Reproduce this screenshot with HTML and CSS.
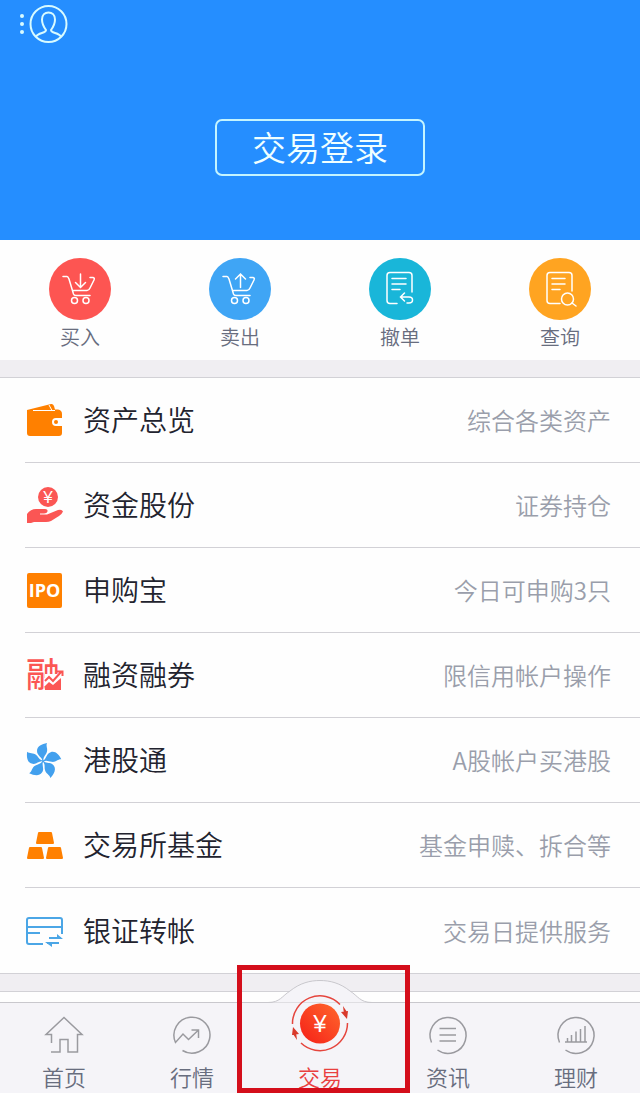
FILE: index.html
```html
<!DOCTYPE html>
<html lang="zh-CN">
<head>
  <meta charset="UTF-8" />
  <meta name="viewport" content="width=device-width, initial-scale=1.0"/>
  <title>交易</title>
  <link rel="stylesheet" href="styles.css">
</head>
<body>
  <!-- 顶部 -->
  <header class="header">
    <button class="header-user" aria-label="用户">
      <svg width="50" height="40" viewBox="0 0 50 40" fill="none" stroke="#d8fbff" stroke-width="2">
        <g fill="#d8fbff" stroke="none">
          <circle cx="4" cy="12" r="2"/><circle cx="4" cy="20" r="2"/><circle cx="4" cy="28" r="2"/>
        </g>
        <circle cx="30.5" cy="20" r="18"/>
        <path d="M18 33C20 28 28 30 28 26C25 22 24 19 24 15.5C24 11 27 8.5 30.5 8.5S37 11 37 15.5C37 19 36 22 33 26C33 30 41 28 43 33"/>
      </svg>
    </button>
    <button class="btn-login">交易登录</button>
  </header>

  <!-- 快捷操作 -->
  <nav class="quick">
    <a class="quick-item" href="#">
      <svg class="quick-icon red" viewBox="0 0 62 62">
        <path d="M14 18.5H18Q19 18.5 20 21L24.5 36Q25 37.5 27 37.5H41M23.5 32.5H38Q40 32.5 41 30L45 22Q46 20 44 19.5H41"/>
        <circle cx="25.5" cy="42.5" r="3"/><circle cx="37" cy="42.5" r="3"/>
        <path d="M31.5 16V29M26.5 24.5L31.5 29.5L36.5 24.5"/>
      </svg>
      <span>买入</span>
    </a>
    <a class="quick-item" href="#">
      <svg class="quick-icon blue" viewBox="0 0 62 62">
        <path d="M14 18.5H18Q19 18.5 20 21L24.5 36Q25 37.5 27 37.5H41M23.5 32.5H38Q40 32.5 41 30L45 22Q46 20 44 19.5H41"/>
        <circle cx="25.5" cy="42.5" r="3"/><circle cx="37" cy="42.5" r="3"/>
        <path d="M31.5 29.5V16.5M26.5 21L31.5 16L36.5 21"/>
      </svg>
      <span>卖出</span>
    </a>
    <a class="quick-item" href="#">
      <svg class="quick-icon cyan" viewBox="0 0 62 62">
        <path d="M28 45.5H21Q18 45.5 18 42.5V17.5Q18 14.5 21 14.5H40Q43 14.5 43 17.5V34"/>
        <path d="M23 20.5H37M23 26H37M23 31.5H31"/>
        <path d="M35.5 35L31.5 39L35.5 43M32 39H40Q43.5 39 43.5 42T40 45H38"/>
      </svg>
      <span>撤单</span>
    </a>
    <a class="quick-item" href="#">
      <svg class="quick-icon orange" viewBox="0 0 62 62">
        <path d="M31 45.5H21Q18 45.5 18 42.5V17.5Q18 14.5 21 14.5H40Q43 14.5 43 17.5V33"/>
        <path d="M23 20.5H36M23 26H36M23 31.5H31"/>
        <circle cx="38.5" cy="41" r="6"/><path d="M43 45L47 48"/>
      </svg>
      <span>查询</span>
    </a>
  </nav>

  <!-- 功能列表 -->
  <main class="menu">
    <a class="menu-row" href="#">
      <svg class="menu-icon" viewBox="0 0 38 38">
        <path fill="#ff8000" d="M2 9L26 3Q28 2.5 29 5L30 8.5H33Q37 9 37 13V17H31Q27 17 27 21T31 25H37V32Q37 35 34 35H5Q2 35 2 32Z"/>
        <path stroke="#fff" stroke-width="1" fill="none" d="M8 9.5H30M24 4L27 9.5"/>
        <circle cx="31" cy="21" r="2" fill="#ff8000"/>
      </svg>
      <span class="menu-title">资产总览</span>
      <span class="menu-note">综合各类资产</span>
    </a>
    <a class="menu-row" href="#">
      <svg class="menu-icon" viewBox="0 0 38 38">
        <circle cx="23" cy="11" r="10" fill="#fb5654"/>
        <text class="yen" x="23" y="17" font-size="17">¥</text>
        <path fill="#fb5654" d="M2 28Q6 22.5 12 23H20Q23 23 22.5 25.5Q22 27.5 19 27.5H15V28.5H22L33 24Q37 23 38 25.5Q37 28 34 30L26 35Q24 36 21 36H9L6 37H2Z"/>
      </svg>
      <span class="menu-title">资金股份</span>
      <span class="menu-note">证券持仓</span>
    </a>
    <a class="menu-row" href="#">
      <svg class="menu-icon" viewBox="0 0 38 38">
        <rect x="2" y="2" width="35" height="35" rx="2" fill="#ff8000"/>
        <text class="ipo" x="19.5" y="26">IPO</text>
      </svg>
      <span class="menu-title">申购宝</span>
      <span class="menu-note">今日可申购3只</span>
    </a>
    <a class="menu-row" href="#">
      <svg class="menu-icon" viewBox="0 0 38 38">
        <text class="rong" x="1" y="31">融</text>
        <path fill="#fefefe" d="M20 18H40V38H20Z"/>
        <path fill="#fb5654" d="M20 34V30L24 26L28 29L36 22V34Z"/>
        <path fill="none" stroke="#fb5654" stroke-width="2" d="M20 25L24 21L28 25L36 16M32 15.5H37.5V20"/>
      </svg>
      <span class="menu-title">融资融券</span>
      <span class="menu-note">限信用帐户操作</span>
    </a>
    <a class="menu-row" href="#">
      <svg class="menu-icon" viewBox="0 0 38 38">
        <defs>
          <path id="petal" d="M-0.5 0C-0.5 -4 -6 -5 -6 -10C-6 -15 -1 -17 4 -18C2.5 -15 5.5 -12 3.5 -8C2 -5 0 -4 0.5 0Z"/>
        </defs>
        <g transform="translate(18 20)" fill="#42a0ee">
          <use href="#petal"/>
          <use href="#petal" transform="rotate(72)"/>
          <use href="#petal" transform="rotate(144)"/>
          <use href="#petal" transform="rotate(216)"/>
          <use href="#petal" transform="rotate(288)"/>
        </g>
      </svg>
      <span class="menu-title">港股通</span>
      <span class="menu-note">A股帐户买港股</span>
    </a>
    <a class="menu-row" href="#">
      <svg class="menu-icon" viewBox="0 0 38 38" fill="#ff8000" stroke="#ff8000" stroke-width="2" stroke-linejoin="round">
        <path d="M14 7H26L28 17H12Z"/>
        <path d="M5 22H16L18 32H3Z"/>
        <path d="M24 22H35L37 32H22Z"/>
      </svg>
      <span class="menu-title">交易所基金</span>
      <span class="menu-note">基金申赎、拆合等</span>
    </a>
    <a class="menu-row" href="#">
      <svg class="menu-icon" viewBox="0 0 38 38" fill="none" stroke="#4ba6e6" stroke-width="2">
        <path d="M18 32H4Q2 32 2 30V8Q2 6 4 6H35Q37 6 37 8V22"/>
        <path d="M2 15H37M2 21H15M24 26H36M22 31H34"/>
        <path fill="#4ba6e6" stroke="none" d="M32 22L38 27H32ZM27 35L20 30H27Z"/>
      </svg>
      <span class="menu-title">银证转帐</span>
      <span class="menu-note">交易日提供服务</span>
    </a>
  </main>

  <!-- 底部导航 -->
  <nav class="tabbar">
    <a class="tab" href="#">
      <svg class="tab-icon" viewBox="0 0 38 38">
        <path d="M6.5 27V18.5H1L19 1.5L37 18.5H32.5V36H23V23.5H15V36H6"/>
      </svg>
      <span>首页</span>
    </a>
    <a class="tab" href="#">
      <svg class="tab-icon" viewBox="0 0 38 38">
        <path d="M9.5 34.5A18 18 0 1 0 2.5 26.5L10 18L15.5 23.5L25.5 14M18.5 14H25.5V22"/>
      </svg>
      <span>行情</span>
    </a>
    <a class="tab tab-active" href="#">
      <svg class="hump" viewBox="0 0 104 24">
        <path d="M0 23.5C12 23.5 14 17 22 12C32 4 42 1.5 52 1.5S72 4 82 12C90 17 92 23.5 104 23.5"/>
      </svg>
      <svg class="trade-icon" viewBox="0 0 60 60">
        <defs>
          <linearGradient id="coin" x1="1" y1="0" x2="0" y2="1">
            <stop offset="0" stop-color="#ff682c"/>
            <stop offset="1" stop-color="#f51f18"/>
          </linearGradient>
        </defs>
        <circle cx="30" cy="29.5" r="20" fill="url(#coin)"/>
        <text class="yen" x="30" y="38" font-size="24">¥</text>
        <g fill="none" stroke="#e5453d" stroke-width="1.5">
          <path d="M2.5 30A27.5 27.5 0 0 1 50 10.5"/>
          <path d="M57.5 29A27.5 27.5 0 0 1 11 49"/>
        </g>
        <path fill="#d93a2c" d="M51 18L58 17L57 25ZM53 12L57 18L54 20ZM9 40L2 41L3 33ZM7 46L3 40L6 38Z"/>
      </svg>
      <span>交易</span>
      <i class="mark"></i>
    </a>
    <a class="tab" href="#">
      <svg class="tab-icon" viewBox="0 0 38 38">
        <path d="M8.5 34A18 18 0 1 0 2.5 26.5M10.5 12.5H27M10.5 19H27M10.5 25H27"/>
      </svg>
      <span>资讯</span>
    </a>
    <a class="tab" href="#">
      <svg class="tab-icon" viewBox="0 0 38 38">
        <path d="M8.5 34A18 18 0 1 0 2.5 26.5M8 26H30M10.5 26V22M14.5 26V19M19 26V15.5M23.5 26V13M28 26V10"/>
      </svg>
      <span>理财</span>
    </a>
  </nav>
</body>
</html>
```
FILE: styles.css
```css
* {
  box-sizing: border-box;
}

body {
  margin: 0;
  min-height: 100vh;
  display: flex;
  flex-direction: column;
  font-family: "Noto Sans CJK SC", sans-serif;
  font-weight: 350;
  background: #fefefe;
}

a {
  color: inherit;
  text-decoration: none;
}

svg {
  display: block;
  overflow: visible;
}

.header {
  height: 240px;
  padding: 4px 18px;
  background: #258eff;
  display: flex;
  flex-direction: column;
  align-items: center;
}

.header-user {
  align-self: flex-start;
  padding: 0;
  border: none;
  background: none;
  cursor: pointer;
}

.btn-login {
  width: 210px;
  height: 57px;
  margin-top: 75px;
  padding: 0 0 2px;
  border: 2px solid #c4f4ff;
  border-radius: 7px;
  background: none;
  color: #f0ffff;
  font: inherit;
  font-size: 34px;
  line-height: 50px;
  cursor: pointer;
}

.quick {
  display: grid;
  grid-template-columns: repeat(4, 1fr);
  padding: 18px 0 8px;
}

.quick-item {
  display: flex;
  flex-direction: column;
  align-items: center;
  gap: 2px;
  font-size: 20px;
  line-height: 30px;
  color: #686d7e;
}

.quick-icon {
  width: 62px;
  height: 62px;
  border-radius: 50%;
  fill: none;
  stroke: #fff;
  stroke-width: 1.5;
  stroke-linecap: round;
}

.red {
  background: #fd5552;
}

.blue {
  background: #3fa5f5;
}

.cyan {
  background: #19b6d9;
}

.orange {
  background: #ffa421;
}

/* 列表 */
.menu {
  border-top: 17px solid #f0eef2;
  border-bottom: 17px solid #f0eef2;
  box-shadow: 0 1px 0 #d2d1d6;
}

.menu::before {
  content: "";
  display: block;
  border-top: 1px solid #d2d1d6;
}

.menu-row {
  display: flex;
  align-items: center;
  gap: 20px;
  height: 85px;
  margin-left: 25px;
  padding-right: 29px;
  border-bottom: 1px solid #d2d1d6;
}

.menu-row:last-child {
  height: 86px;
  margin-left: 0;
  padding-left: 25px;
}

.menu-icon {
  width: 38px;
  height: 38px;
  flex: none;
}

.menu-title {
  flex: 1;
  padding-bottom: 2px;
  font-size: 28px;
  line-height: 40px;
  color: #22232e;
}

.menu-note {
  font-size: 24px;
  line-height: 36px;
  color: #9a9eab;
}

.ipo {
  font-family: "Open Sans", sans-serif;
  font-size: 18px;
  font-weight: 700;
  text-anchor: middle;
  fill: #fff;
}

.yen {
  font-family: "Liberation Sans", sans-serif;
  text-anchor: middle;
  fill: #fff;
}

.rong {
  font-size: 34px;
  font-weight: 500;
  fill: #fb5654;
}

/* 底部导航 */
.tabbar {
  display: grid;
  grid-template-columns: repeat(5, 1fr);
  margin-top: auto;
  background: #f5f4f8;
  border-top: 1px solid #c9c8cd;
}

.tab {
  position: relative;
  display: flex;
  flex-direction: column;
  align-items: center;
  gap: 9px;
  padding: 13px 0 4px;
  font-size: 22px;
  line-height: 26px;
  color: #686d7e;
}

.tab-icon {
  width: 38px;
  height: 38px;
  fill: none;
  stroke: #9a9a9f;
  stroke-width: 1.5;
}

.tab-active {
  color: #e9403f;
}

/* 凸起 */
.hump {
  position: absolute;
  top: -24px;
  left: 50%;
  width: 104px;
  height: 24px;
  margin-left: -52px;
  fill: #f5f4f8;
  stroke: #c9c8cd;
}

.trade-icon {
  position: relative;
  width: 60px;
  height: 60px;
  margin-top: -22px;
}

.mark {
  position: absolute;
  top: -38px;
  bottom: 0;
  left: -19px;
  right: -26px;
  border: 5px solid #d40e1b;
}
```
